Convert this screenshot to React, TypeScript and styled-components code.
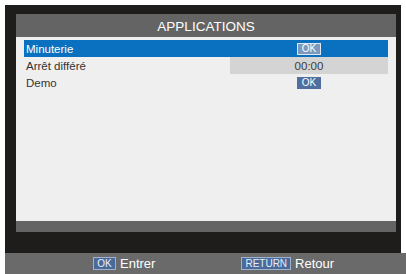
import styled, { createGlobalStyle } from "styled-components"

const GlobalStyle = createGlobalStyle`
    html, body {
        margin: 0;
        padding: 0;
        background: #ffffff;
        font-family: "Liberation Sans", Arial, sans-serif;
    }
`

interface Item {
    name: string
    value: string
    badge?: boolean
}

const items: Item[] = [
    { name: "Minuterie", value: "OK", badge: true },
    { name: "Arrêt différé", value: "00:00" },
    { name: "Demo", value: "OK", badge: true },
]

function App() {
    const selected = 0
    const focusedValue = 1

    return (
        <>
            <GlobalStyle />
            <Screen>
                <Frame>
                    <Header>APPLICATIONS</Header>
                    <Panel>
                        {items.map((item, i) => (
                            <Row key={item.name} $active={i === selected}>
                                <Name>{item.name}</Name>
                                <Value $focused={i === focusedValue}>
                                    {item.badge ? (
                                        <Badge $active={i === selected}>{item.value}</Badge>
                                    ) : (
                                        item.value
                                    )}
                                </Value>
                            </Row>
                        ))}
                    </Panel>
                    <BottomBar />
                </Frame>
                <Footer>
                    <Hint>
                        <KeyTag>OK</KeyTag>
                        <HintText>Entrer</HintText>
                    </Hint>
                    <Hint>
                        <KeyTag>RETURN</KeyTag>
                        <HintText>Retour</HintText>
                    </Hint>
                </Footer>
            </Screen>
        </>
    )
}

export default App

const Screen = styled.div`
    width: 406px;
    height: 274px;
    padding: 5px 0 0 5px;
    box-sizing: border-box;
    display: flex;
    flex-direction: column;
`

const Frame = styled.div`
    width: 396px;
    height: 248px;
    box-sizing: border-box;
    padding: 9px 5px 0 11px;
    background: #1f1c1c;
    display: flex;
    flex-direction: column;
`

const Header = styled.div`
    height: 23px;
    background: #646464;
    color: #ffffff;
    font-size: 13.5px;
    display: flex;
    justify-content: center;
    align-items: center;
    padding-top: 1px;
    box-sizing: border-box;
`

const Panel = styled.div`
    height: 184px;
    box-sizing: border-box;
    padding: 3px 8px 0 8px;
    background: #efefef;
    display: flex;
    flex-direction: column;
`

const Row = styled.div<{ $active: boolean }>`
    height: 17px;
    display: grid;
    grid-template-columns: 206px 1fr;
    align-items: stretch;
    font-size: 11.5px;
    background: ${(p) => (p.$active ? "#0a71c0" : "transparent")};
    color: ${(p) => (p.$active ? "#ffffff" : "#333333")};
`

const Name = styled.div`
    display: flex;
    align-items: center;
    padding-left: 2px;
`

const Value = styled.div<{ $focused: boolean }>`
    display: flex;
    justify-content: center;
    align-items: center;
    background: ${(p) => (p.$focused ? "#d4d4d4" : "transparent")};
    color: #3a3a3a;
`

const Badge = styled.span<{ $active: boolean }>`
    width: 24px;
    height: 12px;
    box-sizing: border-box;
    display: flex;
    justify-content: center;
    align-items: center;
    font-size: 10px;
    color: #ffffff;
    background: ${(p) => (p.$active ? "#7c99bd" : "#4f6f9f")};
    border: 1px solid ${(p) => (p.$active ? "#dfe8f2" : "#4f6f9f")};
`

const BottomBar = styled.div`
    height: 11px;
    background: #646464;
`

const Footer = styled.div`
    height: 21px;
    background: #6a6a6a;
    display: flex;
    align-items: center;
    gap: 86px;
    padding-left: 88px;
`

const Hint = styled.div`
    display: flex;
    align-items: center;
    gap: 4px;
`

const KeyTag = styled.span`
    height: 13px;
    box-sizing: border-box;
    padding: 0 3px;
    min-width: 23px;
    display: flex;
    justify-content: center;
    align-items: center;
    font-size: 10px;
    color: #e8eef6;
    background: #4b6a9c;
    border: 1px solid #9fb3cf;
`

const HintText = styled.span`
    font-size: 13px;
    color: #ffffff;
`
